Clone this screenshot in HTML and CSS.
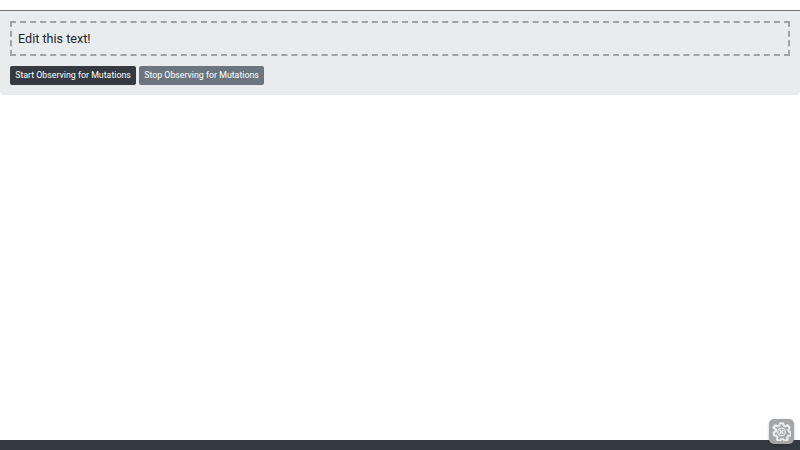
FILE: index.html
```html
<!DOCTYPE html>
<html lang="en">
<head>
<meta charset="utf-8">
<title>Mutation Observer</title>
<link rel="stylesheet" href="styles.css">
</head>
<body>
<div class="page">
  <main class="content">
    <hr class="rule">
    <section class="panel">
      <div class="editable" contenteditable="true">Edit this text!</div>
      <div class="actions">
        <button class="btn btn-dark" type="button">Start Observing for Mutations</button>
        <button class="btn btn-gray" type="button">Stop Observing for Mutations</button>
      </div>
    </section>
  </main>
  <footer class="footer"></footer>
</div>
<button class="settings" type="button" aria-label="Settings">
  <svg viewBox="0 0 24 24" width="19" height="19" fill="none" stroke="#eceded" stroke-linejoin="round" stroke-linecap="round">
    <path stroke-width="2.600" d="M10 1.500h4l.7 3 2.300 1.100 2.700-1.500 2.600 2.900-1.700 2.600.6 2.400 2.800 1.100-.6 3.900-3 .3-1.300 2.100.8 2.900-3.500 1.700-2-2.300h-2.800l-2 2.300-3.500-1.700.8-2.900-1.300-2.100-3-.3-.6-3.900 2.800-1.100.6-2.400L1.600 7l2.600-2.900 2.700 1.500 2.300-1.100z"/>
    <circle stroke-width="1.600" cx="12" cy="12.500" r="4.800"/>
    <path stroke-width="1.800" d="M10 10.500l4 4M14 10.500l-4 4"/>
  </svg>
</button>
</body>
</html>
```
FILE: styles.css
```css
* {
  box-sizing: border-box;
}

html,
body {
  margin: 0;
  height: 100%;
  background: #fff;
}

body {
  font-family: Roboto, "Liberation Sans", sans-serif;
  color: #212529;
  overflow: hidden;
}

.page {
  display: flex;
  flex-direction: column;
  height: 100%;
}

.content {
  flex: 1;
  padding-top: 10px;
}

.rule {
  margin: 0;
  border: 0;
  border-top: 1px solid #6c7074;
}

.panel {
  height: 84px;
  padding: 10px 10px 0;
  background: #e9ecef;
  border-radius: 0 0 4px 4px;
}

.editable {
  height: 35px;
  padding: 0 6px;
  border: 2px dashed #a0a3a6;
  font-size: 12.6px;
  line-height: 32px;
  outline: none;
}

.actions {
  display: flex;
  gap: 3px;
  margin-top: 10px;
}

.btn {
  height: 19px;
  padding: 0;
  border: 0;
  border-radius: 2px;
  color: #fff;
  font-family: inherit;
  font-size: 8.8px;
  line-height: 19px;
  text-align: center;
  white-space: nowrap;
}

.btn-dark {
  width: 126px;
  background: #343a40;
}

.btn-gray {
  width: 125px;
  background: #6c757d;
}

.footer {
  flex: none;
  height: 10px;
  background: #343a40;
}

.settings {
  position: fixed;
  right: 6px;
  bottom: 6px;
  display: flex;
  align-items: center;
  justify-content: center;
  width: 25px;
  height: 25px;
  padding: 0;
  border: 0;
  border-radius: 5px;
  background: #a3a5a7;
  box-shadow: 0 1px 3px rgba(0, 0, 0, 0.25);
}
```
